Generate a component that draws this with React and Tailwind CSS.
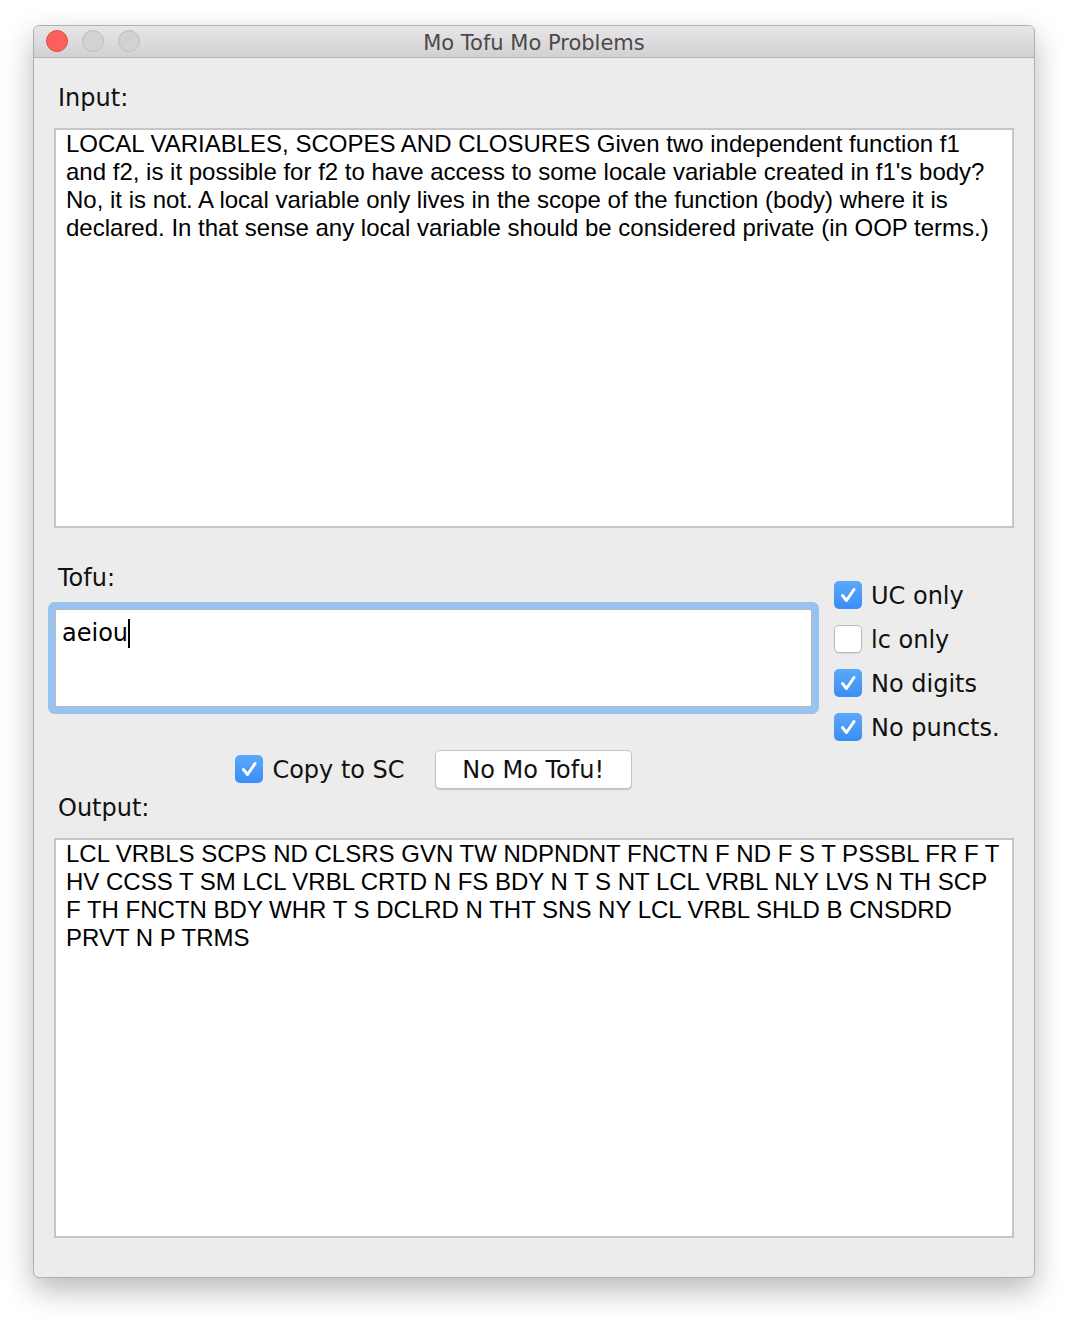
import React from 'react';

const UI_FONT = { fontFamily: '"DejaVu Sans", sans-serif' };
const TEXT_FONT = { fontFamily: '"Liberation Sans", Arial, sans-serif' };

const inputLines = [
  'LOCAL VARIABLES, SCOPES AND CLOSURES Given two independent function f1',
  "and f2, is it possible for f2 to have access to some locale variable created in f1's body?",
  'No, it is not. A local variable only lives in the scope of the function (body) where it is',
  'declared. In that sense any local variable should be considered private (in OOP terms.)',
];

const outputLines = [
  'LCL VRBLS SCPS ND CLSRS GVN TW NDPNDNT FNCTN F ND F S T PSSBL FR F T',
  'HV CCSS T SM LCL VRBL CRTD N FS BDY N T S NT LCL VRBL NLY LVS N TH SCP',
  'F TH FNCTN BDY WHR T S DCLRD N THT SNS NY LCL VRBL SHLD B CNSDRD',
  'PRVT N P TRMS',
];

function Checkbox({ checked, label }) {
  return (
    <div className="flex items-center h-[28px]">
      {checked ? (
        <div className="w-[28px] h-[28px] rounded-[5px] bg-gradient-to-b from-[#5aa9fb] to-[#3a8df6] flex items-center justify-center">
          <svg width="28" height="28" viewBox="0 0 28 28">
            <path d="M8.5 14.5 L12.5 19.5 L20 8.5" fill="none" stroke="#fff" strokeWidth="3" strokeLinecap="round" strokeLinejoin="round" />
          </svg>
        </div>
      ) : (
        <div className="w-[28px] h-[28px] rounded-[5px] bg-white border border-[#b9b9b9] shadow-[0_1px_1px_rgba(0,0,0,0.08)]" />
      )}
      <span className="ml-[9px] pt-[2px] text-[24px] leading-[28px] text-[#111]" style={UI_FONT}>{label}</span>
    </div>
  );
}

function TextBox({ lines }) {
  return (
    <div className="w-[960px] h-[400px] bg-white border-2 border-[#c6c6c6] pl-[10px]">
      <div className="text-[24px] leading-[28px] text-black" style={TEXT_FONT}>
        {lines.map((l, i) => (
          <div key={i} className="whitespace-nowrap">{l}</div>
        ))}
      </div>
    </div>
  );
}

export default function App() {
  return (
    <div className="min-h-[1320px] bg-white pt-[25px] pl-[33px]">
      <div className="w-[1002px] h-[1253px] rounded-[6px] border border-[#b0b0b0] overflow-hidden bg-[#ececec] shadow-[0_12px_30px_rgba(0,0,0,0.28)] flex flex-col">
        {/* title bar */}
        <div className="relative h-[32px] shrink-0 border-b border-[#b4b4b4] bg-gradient-to-b from-[#e8e6e8] to-[#d2d0d2] flex items-center justify-center">
          <div className="absolute left-[12px] top-[4px] flex gap-[14px]">
            <div className="w-[22px] h-[22px] rounded-full bg-[#fc605c] border border-[#de4a45]" />
            <div className="w-[22px] h-[22px] rounded-full bg-[#d2d2d2] border border-[#bdbdbd]" />
            <div className="w-[22px] h-[22px] rounded-full bg-[#d2d2d2] border border-[#bdbdbd]" />
          </div>
          <span className="pt-[2px] text-[21px] leading-[28px] text-[#4a4a4a]" style={UI_FONT}>Mo Tofu Mo Problems</span>
        </div>

        {/* body */}
        <div className="flex-1 px-[20px] pt-[26px]">
          <div className="pl-[4px] text-[24px] leading-[28px] text-[#111]" style={UI_FONT}>Input:</div>
          <div className="mt-[16px]">
            <TextBox lines={inputLines} />
          </div>

          <div className="mt-[35px] flex items-start">
            <div className="w-[759px] flex flex-col">
              <div className="pl-[4px] pt-[1px] h-[28px] text-[24px] leading-[28px] text-[#111]" style={UI_FONT}>Tofu:</div>
              <div className="mt-[18px] ml-[1px] w-[757px] h-[98px] bg-white border border-[#b8b8b8] rounded-[2px] shadow-[0_0_0_7px_#98c2ef] pl-[6px] pt-[9px]">
                <div className="flex items-start text-[24px] leading-[28px] text-black" style={UI_FONT}>
                  <span>aeiou</span>
                  <span className="inline-block w-[2px] h-[29px] bg-black" />
                </div>
              </div>
              <div className="mt-[42px] h-[40px] flex items-center justify-center">
                <Checkbox checked label="Copy to SC" />
                <button className="ml-[30px] w-[197px] h-[39px] bg-white border border-[#c4c4c4] rounded-[5px] shadow-[0_1px_1px_rgba(0,0,0,0.18)] pt-[1px] text-[24px] leading-[28px] text-[#111]" style={UI_FONT}>
                  No Mo Tofu!
                </button>
              </div>
            </div>
            <div className="ml-[21px] mt-[18px] flex flex-col gap-[16px]">
              <Checkbox checked label="UC only" />
              <Checkbox checked={false} label="lc only" />
              <Checkbox checked label="No digits" />
              <Checkbox checked label="No puncts." />
            </div>
          </div>

          <div className="mt-[4px] pt-[1px] h-[28px] pl-[4px] text-[24px] leading-[28px] text-[#111]" style={UI_FONT}>Output:</div>
          <div className="mt-[17px]">
            <TextBox lines={outputLines} />
          </div>
        </div>
      </div>
    </div>
  );
}
